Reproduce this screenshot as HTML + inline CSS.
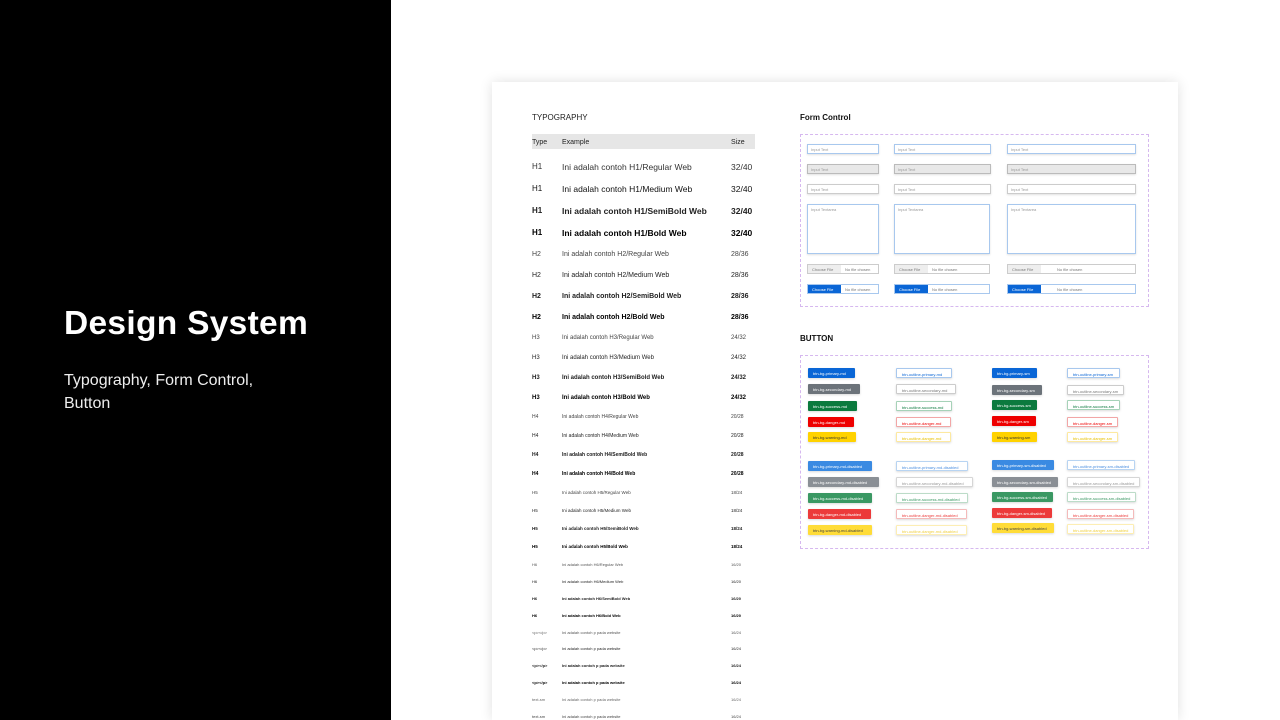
<!DOCTYPE html>
<html><head><meta charset="utf-8"><style>
*{margin:0;padding:0;box-sizing:border-box}
html{width:1280px;height:720px;overflow:hidden}
body{width:1280px;height:720px;overflow:hidden;background:#fff;font-family:"Liberation Sans",sans-serif;position:relative}
.left{position:absolute;left:0;top:0;width:391px;height:720px;background:#000;color:#fff}
.left h1{position:absolute;left:64px;top:305px;font-size:33.5px;font-weight:700;letter-spacing:0.3px;white-space:nowrap}
.left p{position:absolute;left:64px;top:369px;font-size:16px;line-height:23px;color:#eee}
.card{position:absolute;left:492px;top:82px;width:686px;height:638px;background:#fff;box-shadow:0 0 12px rgba(0,0,0,.12)}
.a{position:absolute;white-space:nowrap;color:#222;line-height:1;margin-top:1px}
.hdr{position:absolute;left:532px;top:134px;width:223px;height:15px;background:#e6e6e6}
.box{position:absolute;border:1px dashed #d6b8ef}
.in{position:absolute;height:10px;border:1px solid #a8c8ee;background:#fff;font-size:4px;color:#999;padding:2px 0 0 3px;box-shadow:0 1px 2px rgba(0,0,0,.12)}
.in.g{background:#e8e8e8;border-color:#bbb}
.in.n{border-color:#ccc}
.fi{position:absolute;height:10px;border:1px solid #ccc;font-size:4px;color:#777;display:flex;background:#fff}
.fi span{display:block;padding:2px 0 0 4px}
.fi .b{background:#eee;width:33px}
.fi.p{border-color:#a8c8ee}
.fi.p .b{background:#0a66d6;color:#fff}
.bt{position:absolute;height:10px;font-size:4px;padding:3px 0 0 5px;box-shadow:0 1px 2px rgba(0,0,0,.15);white-space:nowrap;color:#fff;border-radius:1px}
.o{background:#fff;border:1px solid}
</style></head><body>
<div class="left"><h1>Design System</h1><p>Typography, Form Control,<br>Button</p></div>
<div class="card"></div>
<div class="a" style="left:532px;top:113px;font-size:8px">TYPOGRAPHY</div>
<div class="hdr"></div>
<div class="a" style="left:532px;top:138px;font-size:7px">Type</div>
<div class="a" style="left:562px;top:138px;font-size:7px">Example</div>
<div class="a" style="left:731px;top:138px;font-size:7px">Size</div>

<!-- H1 -->
<div class="a" style="left:532px;top:162px;font-size:8px;font-weight:400;color:#333">H1</div><div class="a" style="left:562px;top:162px;font-size:8.5px;font-weight:400;color:#333">Ini adalah contoh H1/Regular Web</div><div class="a" style="left:731px;top:162px;font-size:8.5px;color:#333">32/40</div>
<div class="a" style="left:532px;top:184px;font-size:8px;color:#111">H1</div><div class="a" style="left:562px;top:184px;font-size:8.5px;color:#111">Ini adalah contoh H1/Medium Web</div><div class="a" style="left:731px;top:184px;font-size:8.5px;color:#111">32/40</div>
<div class="a" style="left:532px;top:206px;font-size:8px;font-weight:700">H1</div><div class="a" style="left:562px;top:206px;font-size:8.5px;font-weight:700">Ini adalah contoh H1/SemiBold Web</div><div class="a" style="left:731px;top:206px;font-size:8.5px;font-weight:700">32/40</div>
<div class="a" style="left:532px;top:228px;font-size:8px;font-weight:700;color:#000">H1</div><div class="a" style="left:562px;top:228px;font-size:8.5px;font-weight:700;color:#000">Ini adalah contoh H1/Bold Web</div><div class="a" style="left:731px;top:228px;font-size:8.5px;font-weight:700;color:#000">32/40</div>
<!-- H2 -->
<div class="a" style="left:532px;top:250px;font-size:7px;color:#444">H2</div><div class="a" style="left:562px;top:250px;font-size:7px;color:#444">Ini adalah contoh H2/Regular Web</div><div class="a" style="left:731px;top:250px;font-size:7px;color:#444">28/36</div>
<div class="a" style="left:532px;top:271px;font-size:7px">H2</div><div class="a" style="left:562px;top:271px;font-size:7px">Ini adalah contoh H2/Medium Web</div><div class="a" style="left:731px;top:271px;font-size:7px">28/36</div>
<div class="a" style="left:532px;top:292px;font-size:7px;font-weight:700">H2</div><div class="a" style="left:562px;top:292px;font-size:7px;font-weight:700">Ini adalah contoh H2/SemiBold Web</div><div class="a" style="left:731px;top:292px;font-size:7px;font-weight:700">28/36</div>
<div class="a" style="left:532px;top:313px;font-size:7px;font-weight:700;color:#000">H2</div><div class="a" style="left:562px;top:313px;font-size:7px;font-weight:700;color:#000">Ini adalah contoh H2/Bold Web</div><div class="a" style="left:731px;top:313px;font-size:7px;font-weight:700;color:#000">28/36</div>
<!-- H3 -->
<div class="a" style="left:532px;top:334px;font-size:6px;color:#444">H3</div><div class="a" style="left:562px;top:334px;font-size:6px;color:#444">Ini adalah contoh H3/Regular Web</div><div class="a" style="left:731px;top:334px;font-size:6px;color:#444">24/32</div>
<div class="a" style="left:532px;top:354px;font-size:6px">H3</div><div class="a" style="left:562px;top:354px;font-size:6px">Ini adalah contoh H3/Medium Web</div><div class="a" style="left:731px;top:354px;font-size:6px">24/32</div>
<div class="a" style="left:532px;top:374px;font-size:6px;font-weight:700">H3</div><div class="a" style="left:562px;top:374px;font-size:6px;font-weight:700">Ini adalah contoh H3/SemiBold Web</div><div class="a" style="left:731px;top:374px;font-size:6px;font-weight:700">24/32</div>
<div class="a" style="left:532px;top:394px;font-size:6px;font-weight:700;color:#000">H3</div><div class="a" style="left:562px;top:394px;font-size:6px;font-weight:700;color:#000">Ini adalah contoh H3/Bold Web</div><div class="a" style="left:731px;top:394px;font-size:6px;font-weight:700;color:#000">24/32</div>
<!-- H4 -->
<div class="a" style="left:532px;top:414px;font-size:5px;color:#444">H4</div><div class="a" style="left:562px;top:414px;font-size:5px;color:#444">Ini adalah contoh H4/Regular Web</div><div class="a" style="left:731px;top:414px;font-size:5px;color:#444">20/28</div>
<div class="a" style="left:532px;top:433px;font-size:5px">H4</div><div class="a" style="left:562px;top:433px;font-size:5px">Ini adalah contoh H4/Medium Web</div><div class="a" style="left:731px;top:433px;font-size:5px">20/28</div>
<div class="a" style="left:532px;top:452px;font-size:5px;font-weight:700">H4</div><div class="a" style="left:562px;top:452px;font-size:5px;font-weight:700">Ini adalah contoh H4/SemiBold Web</div><div class="a" style="left:731px;top:452px;font-size:5px;font-weight:700">20/28</div>
<div class="a" style="left:532px;top:471px;font-size:5px;font-weight:700;color:#000">H4</div><div class="a" style="left:562px;top:471px;font-size:5px;font-weight:700;color:#000">Ini adalah contoh H4/Bold Web</div><div class="a" style="left:731px;top:471px;font-size:5px;font-weight:700;color:#000">20/28</div>
<!-- H5 -->
<div class="a" style="left:532px;top:490px;font-size:4.5px;color:#444">H5</div><div class="a" style="left:562px;top:490px;font-size:4.5px;color:#444">Ini adalah contoh H5/Regular Web</div><div class="a" style="left:731px;top:490px;font-size:4.5px;color:#444">18/24</div>
<div class="a" style="left:532px;top:508px;font-size:4.5px">H5</div><div class="a" style="left:562px;top:508px;font-size:4.5px">Ini adalah contoh H5/Medium Web</div><div class="a" style="left:731px;top:508px;font-size:4.5px">18/24</div>
<div class="a" style="left:532px;top:526px;font-size:4.5px;font-weight:700">H5</div><div class="a" style="left:562px;top:526px;font-size:4.5px;font-weight:700">Ini adalah contoh H5/SemiBold Web</div><div class="a" style="left:731px;top:526px;font-size:4.5px;font-weight:700">18/24</div>
<div class="a" style="left:532px;top:544px;font-size:4.5px;font-weight:700;color:#000">H5</div><div class="a" style="left:562px;top:544px;font-size:4.5px;font-weight:700;color:#000">Ini adalah contoh H5/Bold Web</div><div class="a" style="left:731px;top:544px;font-size:4.5px;font-weight:700;color:#000">18/24</div>
<!-- H6 -->
<div class="a" style="left:532px;top:562px;font-size:4px;color:#555">H6</div><div class="a" style="left:562px;top:562px;font-size:4px;color:#555">Ini adalah contoh H6/Regular Web</div><div class="a" style="left:731px;top:562px;font-size:4px;color:#555">16/20</div>
<div class="a" style="left:532px;top:579px;font-size:4px">H6</div><div class="a" style="left:562px;top:579px;font-size:4px">Ini adalah contoh H6/Medium Web</div><div class="a" style="left:731px;top:579px;font-size:4px">16/20</div>
<div class="a" style="left:532px;top:596px;font-size:4px;font-weight:700">H6</div><div class="a" style="left:562px;top:596px;font-size:4px;font-weight:700">Ini adalah contoh H6/SemiBold Web</div><div class="a" style="left:731px;top:596px;font-size:4px;font-weight:700">16/20</div>
<div class="a" style="left:532px;top:613px;font-size:4px;font-weight:700;color:#000">H6</div><div class="a" style="left:562px;top:613px;font-size:4px;font-weight:700;color:#000">Ini adalah contoh H6/Bold Web</div><div class="a" style="left:731px;top:613px;font-size:4px;font-weight:700;color:#000">16/20</div>
<!-- p -->
<div class="a" style="left:532px;top:630px;font-size:4px;color:#555">&lt;p&gt;&lt;/p&gt;</div><div class="a" style="left:562px;top:630px;font-size:4px;color:#555">Ini adalah contoh p pada website</div><div class="a" style="left:731px;top:630px;font-size:4px;color:#555">16/24</div>
<div class="a" style="left:532px;top:646px;font-size:4px">&lt;p&gt;&lt;/p&gt;</div><div class="a" style="left:562px;top:646px;font-size:4px">Ini adalah contoh p pada website</div><div class="a" style="left:731px;top:646px;font-size:4px">16/24</div>
<div class="a" style="left:532px;top:663px;font-size:4px;font-weight:700">&lt;p&gt;&lt;/p&gt;</div><div class="a" style="left:562px;top:663px;font-size:4px;font-weight:700">Ini adalah contoh p pada website</div><div class="a" style="left:731px;top:663px;font-size:4px;font-weight:700">16/24</div>
<div class="a" style="left:532px;top:680px;font-size:4px;font-weight:700;color:#000">&lt;p&gt;&lt;/p&gt;</div><div class="a" style="left:562px;top:680px;font-size:4px;font-weight:700;color:#000">Ini adalah contoh p pada website</div><div class="a" style="left:731px;top:680px;font-size:4px;font-weight:700;color:#000">16/24</div>
<div class="a" style="left:532px;top:697px;font-size:4px;color:#666">text-sm</div><div class="a" style="left:562px;top:697px;font-size:4px;color:#666">Ini adalah contoh p pada website</div><div class="a" style="left:731px;top:697px;font-size:4px;color:#666">16/24</div>
<div class="a" style="left:532px;top:714px;font-size:4px;color:#444">text-sm</div><div class="a" style="left:562px;top:714px;font-size:4px;color:#444">Ini adalah contoh p pada website</div><div class="a" style="left:731px;top:714px;font-size:4px;color:#444">16/24</div>

<!-- Form control -->
<div class="a" style="left:800px;top:113px;font-size:8px;font-weight:700;color:#111">Form Control</div>
<div class="box" style="left:800px;top:134px;width:349px;height:173px"></div>
<div class="in" style="left:807px;top:144px;width:72px">Input Text</div>
<div class="in" style="left:894px;top:144px;width:97px">Input Text</div>
<div class="in" style="left:1007px;top:144px;width:129px">Input Text</div>
<div class="in g" style="left:807px;top:164px;width:72px">Input Text</div>
<div class="in g" style="left:894px;top:164px;width:97px">Input Text</div>
<div class="in g" style="left:1007px;top:164px;width:129px">Input Text</div>
<div class="in n" style="left:807px;top:184px;width:72px">Input Text</div>
<div class="in n" style="left:894px;top:184px;width:97px">Input Text</div>
<div class="in n" style="left:1007px;top:184px;width:129px">Input Text</div>
<div class="in" style="left:807px;top:204px;width:72px;height:50px">Input Textarea</div>
<div class="in" style="left:894px;top:204px;width:96px;height:50px">Input Textarea</div>
<div class="in" style="left:1007px;top:204px;width:129px;height:50px">Input Textarea</div>
<div class="fi" style="left:807px;top:264px;width:72px"><span class="b">Choose File</span><span>No file chosen</span></div>
<div class="fi" style="left:894px;top:264px;width:96px"><span class="b">Choose File</span><span>No file chosen</span></div>
<div class="fi" style="left:1007px;top:264px;width:129px"><span class="b">Choose File</span><span style="padding-left:16px">No file chosen</span></div>
<div class="fi p" style="left:807px;top:284px;width:72px"><span class="b">Choose File</span><span>No file chosen</span></div>
<div class="fi p" style="left:894px;top:284px;width:96px"><span class="b">Choose File</span><span>No file chosen</span></div>
<div class="fi p" style="left:1007px;top:284px;width:129px"><span class="b">Choose File</span><span style="padding-left:16px">No file chosen</span></div>

<!-- Button -->
<div class="a" style="left:800px;top:334px;font-size:8px;font-weight:700;color:#111">BUTTON</div>
<div class="box" style="left:800px;top:355px;width:349px;height:194px"></div>

<div class="bt" style="left:808px;top:368px;width:47px;background:#0a66d6">btn-bg-primary-md</div>
<div class="bt" style="left:808px;top:384px;width:52px;background:#6c737a">btn-bg-secondary-md</div>
<div class="bt" style="left:808px;top:401px;width:49px;background:#0b7a3e">btn-bg-success-md</div>
<div class="bt" style="left:808px;top:417px;width:46px;background:#e00">btn-bg-danger-md</div>
<div class="bt" style="left:808px;top:432px;width:48px;background:#ffd200;color:#333">btn-bg-warning-md</div>

<div class="bt o" style="left:896px;top:368px;width:56px;border-color:#a8c8ee;color:#0a66d6">btn-outline-primary-md</div>
<div class="bt o" style="left:896px;top:384px;width:60px;border-color:#ccc;color:#777">btn-outline-secondary-md</div>
<div class="bt o" style="left:896px;top:401px;width:56px;border-color:#a6d2b8;color:#0b7a3e">btn-outline-success-md</div>
<div class="bt o" style="left:896px;top:417px;width:55px;border-color:#f2a6a6;color:#e00">btn-outline-danger-md</div>
<div class="bt o" style="left:896px;top:432px;width:55px;border-color:#fde9a0;color:#e8c000">btn-outline-danger-md</div>

<div class="bt" style="left:992px;top:368px;width:45px;background:#0a66d6">btn-bg-primary-sm</div>
<div class="bt" style="left:992px;top:385px;width:50px;background:#6c737a">btn-bg-secondary-sm</div>
<div class="bt" style="left:992px;top:400px;width:45px;background:#0b7a3e">btn-bg-success-sm</div>
<div class="bt" style="left:992px;top:416px;width:44px;background:#e00">btn-bg-danger-sm</div>
<div class="bt" style="left:992px;top:432px;width:45px;background:#ffd200;color:#333">btn-bg-warning-sm</div>

<div class="bt o" style="left:1067px;top:368px;width:53px;border-color:#a8c8ee;color:#0a66d6">btn-outline-primary-sm</div>
<div class="bt o" style="left:1067px;top:385px;width:57px;border-color:#ccc;color:#777">btn-outline-secondary-sm</div>
<div class="bt o" style="left:1067px;top:400px;width:53px;border-color:#a6d2b8;color:#0b7a3e">btn-outline-success-sm</div>
<div class="bt o" style="left:1067px;top:417px;width:51px;border-color:#f2a6a6;color:#e00">btn-outline-danger-sm</div>
<div class="bt o" style="left:1067px;top:432px;width:51px;border-color:#fde9a0;color:#e8c000">btn-outline-danger-sm</div>

<div class="bt" style="left:808px;top:461px;width:64px;background:#3a8ae2">btn-bg-primary-md-disabled</div>
<div class="bt" style="left:808px;top:477px;width:71px;background:#8a8f95">btn-bg-secondary-md-disabled</div>
<div class="bt" style="left:808px;top:493px;width:64px;background:#3a9863">btn-bg-success-md-disabled</div>
<div class="bt" style="left:808px;top:509px;width:63px;background:#ec3a3a">btn-bg-danger-md-disabled</div>
<div class="bt" style="left:808px;top:525px;width:64px;background:#ffdc38;color:#444">btn-bg-warning-md-disabled</div>

<div class="bt o" style="left:896px;top:461px;width:72px;border-color:#b8d4f2;color:#4a8ee0">btn-outline-primary-md-disabled</div>
<div class="bt o" style="left:896px;top:477px;width:77px;border-color:#d6d6d6;color:#999">btn-outline-secondary-md-disabled</div>
<div class="bt o" style="left:896px;top:493px;width:72px;border-color:#bcdcc8;color:#3a9863">btn-outline-success-md-disabled</div>
<div class="bt o" style="left:896px;top:509px;width:71px;border-color:#f4baba;color:#ec3a3a">btn-outline-danger-md-disabled</div>
<div class="bt o" style="left:896px;top:525px;width:71px;border-color:#fdeeb4;color:#f0d040">btn-outline-danger-md-disabled</div>

<div class="bt" style="left:992px;top:460px;width:62px;background:#3a8ae2">btn-bg-primary-sm-disabled</div>
<div class="bt" style="left:992px;top:477px;width:66px;background:#8a8f95">btn-bg-secondary-sm-disabled</div>
<div class="bt" style="left:992px;top:492px;width:61px;background:#3a9863">btn-bg-success-sm-disabled</div>
<div class="bt" style="left:992px;top:508px;width:60px;background:#ec3a3a">btn-bg-danger-sm-disabled</div>
<div class="bt" style="left:992px;top:523px;width:62px;background:#ffdc38;color:#444">btn-bg-warning-sm-disabled</div>

<div class="bt o" style="left:1067px;top:460px;width:68px;border-color:#b8d4f2;color:#4a8ee0">btn-outline-primary-sm-disabled</div>
<div class="bt o" style="left:1067px;top:477px;width:73px;border-color:#d6d6d6;color:#999">btn-outline-secondary-sm-disabled</div>
<div class="bt o" style="left:1067px;top:492px;width:69px;border-color:#bcdcc8;color:#3a9863">btn-outline-success-sm-disabled</div>
<div class="bt o" style="left:1067px;top:509px;width:67px;border-color:#f4baba;color:#ec3a3a">btn-outline-danger-sm-disabled</div>
<div class="bt o" style="left:1067px;top:524px;width:67px;border-color:#fdeeb4;color:#f0d040">btn-outline-danger-sm-disabled</div>
</body></html>
